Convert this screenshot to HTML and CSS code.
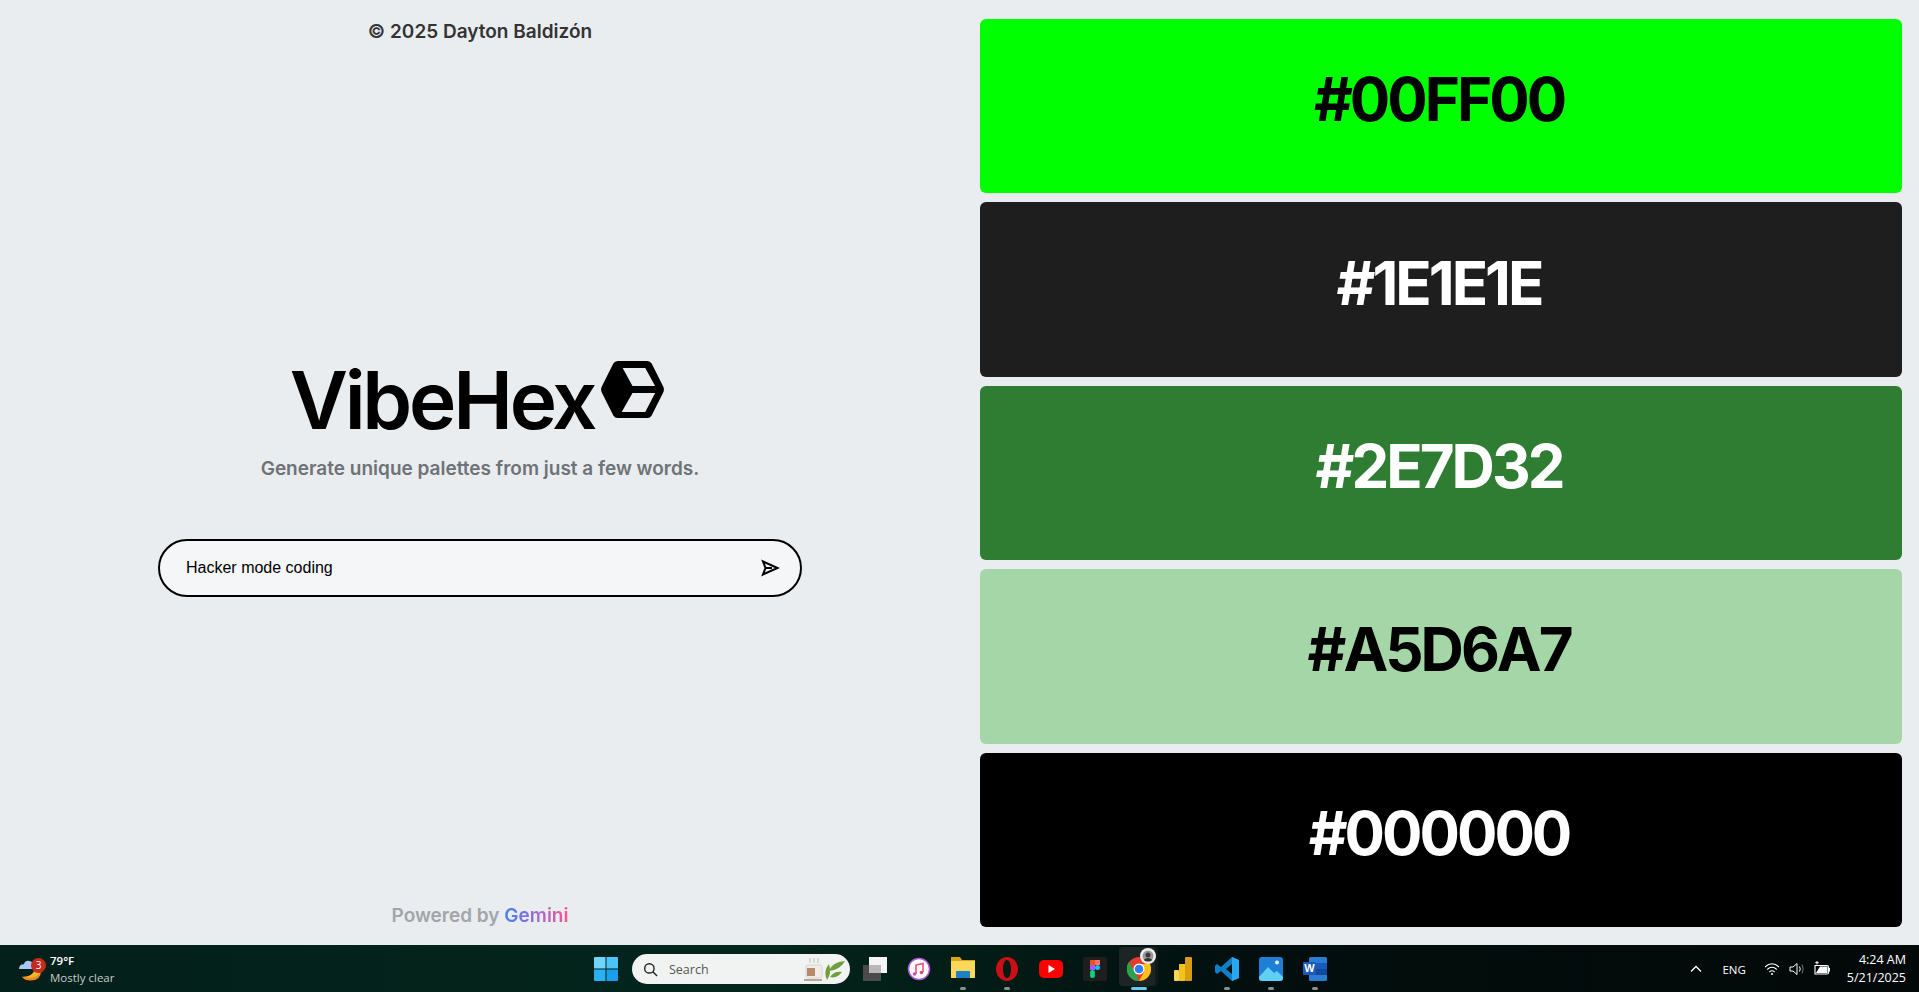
FILE: index.html
```html
<!DOCTYPE html>
<html lang="en">
<head>
  <meta charset="UTF-8">
  <meta name="viewport" content="width=device-width, initial-scale=1.0">
  <title>VibeHex</title>
  <link rel="stylesheet" href="styles.css">
</head>
<body>
  <div class="main">
    <div class="left">
      <p class="copyright">© 2025 Dayton Baldizón</p>
      <div class="hero">
        <div class="logo">
          <h1>VibeHex</h1>
          <svg class="logo-icon" viewBox="0 0 64 58">
            <path fill-rule="evenodd" d="M17 0H47Q50 0 51.500 2.600L63 25.500Q65 29 63 32.500L51.500 55.400Q50 58 47 58H17Q14 58 12.500 55.400L1 32.500Q-1 29 1 25.500L12.500 2.600Q14 0 17 0ZM22 7L32 25.500H55L45 7ZM32 32.500L21 52H45L55 32.500Z"/>
          </svg>
        </div>
        <p class="tagline">Generate unique palettes from just a few words.</p>
        <div class="prompt">
          <span class="prompt-text">Hacker mode coding</span>
          <svg class="send" viewBox="0 0 20 20" fill="none" stroke="#000" stroke-width="2" stroke-linejoin="miter">
            <path d="M3 3.500L17.500 10L3 16.500L5.500 10ZM5.500 10H12"/>
          </svg>
        </div>
      </div>
      <p class="powered">Powered by <span class="gemini">Gemini</span></p>
    </div>
    <div class="palette">
      <div class="swatch" style="background: #00FF00; color: #000">#00FF00</div>
      <div class="swatch" style="background: #1E1E1E; color: #fff">#1E1E1E</div>
      <div class="swatch" style="background: #2E7D32; color: #fff">#2E7D32</div>
      <div class="swatch" style="background: #A5D6A7; color: #000">#A5D6A7</div>
      <div class="swatch" style="background: #000000; color: #fff">#000000</div>
    </div>
  </div>

  <div class="taskbar">
    <div class="weather">
      <svg class="weather-icon" viewBox="0 0 24 24">
        <path fill="#f08a1c" d="M3 14H23Q23 24 12 24Q6 24 3 20Q12 21 16 14Z"/>
        <path fill="#f5b62a" d="M16 14H23Q22 18 17 20Q10 22 5 20Q13 20 16 14Z"/>
        <path fill="#a9c8f5" d="M0 12Q0 7 5 7Q7 2 12 4Q15 5 15 9Q18 10 17 12Z"/>
      </svg>
      <span class="badge">3</span>
      <div class="weather-text">
        <span class="temp">79°F</span>
        <span class="cond">Mostly clear</span>
      </div>
    </div>

    <div class="apps">
      <svg class="app win" viewBox="0 0 24 24">
        <path fill="#6fd6fb" d="M0 1Q0 0 1 0H11.500V11.500H0Z"/>
        <path fill="#4cc4f7" d="M12.500 0H23Q24 0 24 1V11.500H12.500Z"/>
        <path fill="#2bb0f2" d="M0 12.500H11.500V24H1Q0 24 0 23Z"/>
        <path fill="#1a9fee" d="M12.500 12.500H24V23Q24 24 23 24H12.500Z"/>
      </svg>
      <div class="search">
        <svg class="search-icon" viewBox="0 0 16 16" fill="none" stroke="#222" stroke-width="1.500">
          <circle cx="6.800" cy="6.800" r="5"/><path d="M10.500 10.500L15 15"/>
        </svg>
        <span class="search-text">Search</span>
        <svg class="search-art" viewBox="0 0 44 28">
          <rect x="2" y="10" width="16" height="13" rx="2" fill="#f2ece8" stroke="#c9c1bc" stroke-width=".6"/>
          <rect x="3" y="13" width="8" height="8" fill="#b78a6c"/>
          <path d="M0 25H18" stroke="#7a5a4a"/>
          <path d="M6 3V8M10 3V8M14 3V8" stroke="#bbb"/>
          <path fill="#6f9e3c" d="M23 25Q19 16 25 9Q28 18 23 25ZM25 16Q28 7 41 6Q36 15 25 16ZM26 22Q30 16 38 17Q33 24 26 22Z"/>
        </svg>
      </div>
      <svg class="app" viewBox="0 0 24 24">
        <rect x="0" y="8" width="18" height="16" fill="#4a4a4a"/>
        <rect x="6" y="0" width="18" height="16" fill="#f4f4f4"/>
        <rect x="6" y="8" width="12" height="8" fill="#b8b8b8"/>
      </svg>
      <svg class="app" viewBox="0 0 24 24">
        <circle cx="12" cy="12" r="10.500" fill="#fff" stroke="#b05ad8" stroke-width="1.500"/>
        <path d="M9 17V8L16 6.500V15" fill="none" stroke="#e8486f" stroke-width="1.500"/>
        <circle cx="7.500" cy="17" r="1.800" fill="#c94fb0"/><circle cx="14.500" cy="15.500" r="1.800" fill="#e8486f"/>
      </svg>
      <div class="app-wrap running">
        <svg class="app" viewBox="0 0 24 24">
          <path fill="#d9a514" d="M0 0H9L11 3H24V9H0Z"/>
          <rect y="4" width="24" height="17" fill="#fbd75b"/>
          <rect x="5" y="14" width="14" height="7" rx="1" fill="#1b80c4"/>
        </svg>
      </div>
      <div class="app-wrap running">
        <svg class="app" viewBox="0 0 24 24">
          <path fill="#cc0f16" fill-rule="evenodd" d="M12 0C18 0 23 5.500 23 12S18 24 12 24S1 18.500 1 12S6 0 12 0ZM12 3C9.500 3 8 7 8 12S9.500 21 12 21S16 17 16 12S14.500 3 12 3Z"/>
        </svg>
      </div>
      <svg class="app" viewBox="0 0 24 24">
        <rect y="3" width="24" height="18" rx="5" fill="#f00"/>
        <path fill="#fff" d="M9.500 8L16 12L9.500 16Z"/>
      </svg>
      <svg class="app" viewBox="0 0 24 24">
        <rect width="24" height="24" rx="2" fill="#1e1e1e"/>
        <rect x="7" y="3" width="5" height="5" fill="#f24e1e"/><rect x="12" y="3" width="5" height="5" fill="#ff7262"/>
        <rect x="7" y="8" width="5" height="5" fill="#a259ff"/><circle cx="14.500" cy="10.500" r="2.500" fill="#1abcfe"/>
        <circle cx="9.500" cy="15.500" r="2.500" fill="#0acf83"/><circle cx="9.500" cy="18.500" r="2.500" fill="#0acf83"/>
      </svg>
      <div class="app-wrap active">
        <svg class="app" viewBox="0 0 24 24">
          <circle cx="12" cy="12" r="12" fill="#e33b2e"/>
          <path fill="#2ba24c" d="M2 5L7.500 14.500L12 24A12 12 0 0 1 2 5Z"/>
          <path fill="#fbc116" d="M12 7H23A12 12 0 0 1 12 24L17 15Z"/>
          <circle cx="12" cy="12" r="5.500" fill="#fff"/><circle cx="12" cy="12" r="4.300" fill="#2f7ef0"/>
        </svg>
        <svg class="profile" viewBox="0 0 16 16">
          <circle cx="8" cy="8" r="8" fill="#eee"/>
          <circle cx="8" cy="8" r="5.500" fill="#999"/>
          <circle cx="8" cy="7" r="2.500" fill="#3a3a3a"/>
          <path d="M3.500 12Q8 8 12.500 12Q8 15 3.500 12Z" fill="#333"/>
        </svg>
      </div>
      <svg class="app" viewBox="0 0 24 24">
        <rect x="14" y="0" width="7" height="24" rx="1" fill="#d99e0f"/>
        <rect x="8" y="7" width="6" height="17" fill="#f2c31c"/>
        <rect x="3" y="13" width="5" height="11" rx="1" fill="#f8d65a"/>
      </svg>
      <div class="app-wrap running">
        <svg class="app" viewBox="0 0 24 24">
          <path fill="#0f7fc9" d="M17 0L24 3V21L17 24L6 14L2 17L0 15V9L2 7L6 10ZM17 7L11 12L17 17Z"/>
          <path fill="#29a8ef" d="M17 0L24 3V21L17 24Z"/>
        </svg>
      </div>
      <div class="app-wrap running">
        <svg class="app" viewBox="0 0 24 24">
          <rect width="24" height="24" rx="3" fill="#1f7fd6"/>
          <path fill="#5fd0f5" d="M0 20L9 10L15 16L18 14L24 20V21Q24 24 21 24H3Q0 24 0 21Z"/>
          <circle cx="18" cy="5.500" r="2" fill="#e6f4fd"/>
        </svg>
      </div>
      <div class="app-wrap running">
        <svg class="app" viewBox="0 0 24 24">
          <rect x="6" y="0" width="18" height="24" rx="1.500" fill="#2b7cd3"/>
          <rect x="6" y="6" width="18" height="6" fill="#185abd"/>
          <rect x="6" y="12" width="18" height="6" fill="#144a9e"/>
          <rect x="0" y="5" width="13" height="13" rx="1" fill="#1a5ab8"/>
          <text class="word-w" x="6.500" y="15">W</text>
        </svg>
      </div>
    </div>

    <div class="tray">
      <svg class="chev" viewBox="0 0 12 8" fill="none" stroke="#fff" stroke-width="1.300"><path d="M1 6.500L6 1.500L11 6.500"/></svg>
      <span class="lang">ENG</span>
      <svg class="tray-icon" viewBox="0 0 16 16" fill="none" stroke="#fff" stroke-width="1.100">
        <path d="M1 6Q8 -0.500 15 6M3.200 8.500Q8 4 12.800 8.500M5.400 11Q8 8.500 10.600 11"/><circle cx="8" cy="13" r="1" fill="#fff" stroke="none"/>
      </svg>
      <svg class="tray-icon" viewBox="0 0 16 16" fill="none" stroke="#fff" stroke-width="1">
        <path d="M1 6H4L8 2.500V13.500L4 10H1Z"/><path d="M10.500 5.500Q12 8 10.500 10.500"/><path d="M13 3.500Q15.500 8 13 12.500" stroke="#777"/>
      </svg>
      <svg class="tray-icon" viewBox="0 0 16 16">
        <path fill="none" stroke="#fff" stroke-width="1.100" d="M1 4.500H13Q14.500 4.500 14.500 6V11.500Q14.500 13 13 13H1Z"/>
        <path fill="#fff" d="M15 7H16V10.500H15Z"/>
        <path fill="#fff" d="M2 12L6 5.500H13.500V12Z"/>
        <path d="M3 0V3.500M1.200 1.700H4.800" stroke="#fff" fill="none"/>
      </svg>
      <div class="clock">
        <span>4:24 AM</span>
        <span>5/21/2025</span>
      </div>
    </div>
  </div>
</body>
</html>
```

FILE: styles.css
```css
* { box-sizing: border-box; }
html, body { margin: 0; height: 100%; }
body {
  font-family: Inter, sans-serif;
  background: #e9edf0;
  display: flex; flex-direction: column;
  height: 992px; overflow: hidden;
}

.main { display: flex; height: 945px; }

.left {
  width: 960px;
  display: flex; flex-direction: column; align-items: center;
  padding: 20px 0 17px;
}
.copyright { margin: 0; font-size: 19px; font-weight: 640; color: #333; line-height: 23px; }
.hero {
  flex: 1; width: 100%;
  display: flex; flex-direction: column; align-items: center; justify-content: center;
  padding-top: 4px;
}
.logo { display: flex; align-items: flex-start; height: 90px; margin-left: -6px; }
.logo h1 { margin: 0; font-size: 80px; font-weight: 600; line-height: 90px; letter-spacing: -3.200px; color: #000; }
.logo-icon { width: 63px; height: 57px; margin: 6px 0 0 7px; }
.tagline { margin: 12px 0 58px; font-size: 19px; font-weight: 640; color: #6f7276; line-height: 24px; }
.prompt {
  width: 644px; height: 58px;
  display: flex; align-items: center; justify-content: space-between;
  padding: 0 20px 0 26px;
  background: #f5f6f8;
  border: 2px solid #000; border-radius: 29px;
}
.prompt-text { font-family: "Liberation Sans", Arial, sans-serif; font-size: 16px; color: #000; }
.send { width: 20px; height: 20px; }
.powered { margin: 0; font-size: 19px; font-weight: 640; color: #a3a5a8; line-height: 24px; }
.gemini {
  background: linear-gradient(to right, #3f83f4, #9a6ccf, #f4558f);
  -webkit-background-clip: text; background-clip: text; color: transparent;
}

.palette {
  width: 959px;
  display: flex; flex-direction: column; gap: 9px;
  padding: 19px 17px 18px 20px;
}
.swatch {
  flex: 1;
  display: flex; align-items: center; justify-content: center;
  padding: 0 4px 14px 0;
  border-radius: 6px;
  font-size: 60px; font-weight: 750; letter-spacing: -3px;
}

.taskbar {
  height: 47px;
  display: flex; align-items: center;
  background: linear-gradient(to right, #03201a, #03251c 40%, #020f0e 65%, #030808);
  color: #fff;
  font-family: "Open Sans", sans-serif;
  position: relative;
}
.weather { display: flex; align-items: center; padding-left: 19px; width: 590px; position: relative; }
.weather-icon { width: 23px; height: 24px; }
.badge {
  position: absolute; left: 31px; top: 6px;
  width: 15px; height: 15px; border-radius: 50%;
  background: #c42b1c; font-size: 10px; line-height: 15px; text-align: center;
}
.weather-text { display: flex; flex-direction: column; margin-left: 8px; font-size: 11.500px; line-height: 17px; }
.temp { font-weight: 600; }
.cond { color: #c5cbc9; }

.apps { display: flex; align-items: center; gap: 20px; margin-left: 4px; margin-top: 1px; }
.app { width: 24px; height: 24px; display: block; }
.win { margin-right: -1px; }
.search {
  width: 218px; height: 30px; margin-right: -7px; margin-left: -5px;
  display: flex; align-items: center;
  padding: 0 2px 0 11px;
  background: #f1f3f2; border-radius: 15px;
}
.search-icon { width: 15px; height: 15px; }
.search-text { margin-left: 11px; flex: 1; font-size: 12.500px; color: #555; }
.search-art { width: 44px; height: 28px; }
.app-wrap { position: relative; }
.running::after {
  content: ""; position: absolute; left: 9px; bottom: -9px;
  width: 6px; height: 3px; border-radius: 2px; background: #8a8f8e;
}
.active::before {
  content: ""; position: absolute; left: -8px; top: -10px;
  width: 36px; height: 39px; border-radius: 4px; background: #1b2523;
  box-shadow: 3px 0 0 #101a19;
}
.active .app { position: relative; }
.active::after {
  content: ""; position: absolute; left: 4px; bottom: -9px;
  width: 16px; height: 3px; border-radius: 2px; background: #5fcdf5;
}
.profile {
  position: absolute; left: 13px; top: -9px;
  width: 16px; height: 16px;
}
.word-w { font-family: "Liberation Sans", sans-serif; font-size: 11px; font-weight: 700; fill: #fff; text-anchor: middle; }

.tray {
  position: absolute; right: 0; top: 0; height: 47px;
  display: flex; align-items: center;
  padding-right: 13px;
  font-size: 11.500px;
}
.chev { width: 12px; height: 8px; }
.lang { margin: 2px 18px 0 20px; }
.tray-icon { width: 16px; height: 16px; margin-right: 9px; }
.clock { display: flex; flex-direction: column; align-items: flex-end; margin-left: 8px; font-size: 12.500px; line-height: 18px; }
```
